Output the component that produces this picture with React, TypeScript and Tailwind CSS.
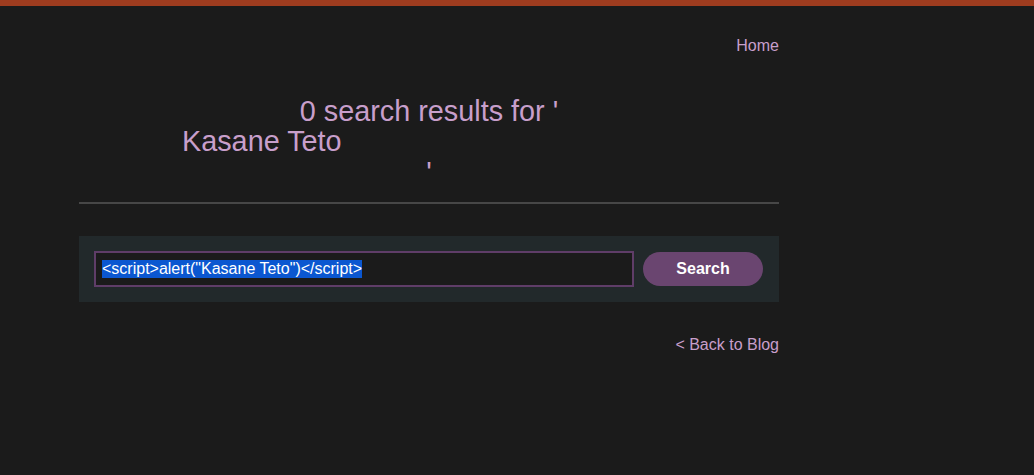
import { useState } from 'react';

const SearchBox = ({ term }: { term: string }) => {
  return (
    <section className="mt-[32px] bg-[#22292b] pl-[15px] pr-[16px] py-[15px] flex items-center gap-[9px]">
      <div className="flex-1 h-[36px] border-2 border-[#5f3d68] bg-[#1b1b1b] flex items-center px-[6px]">
        <span className="bg-[#0b57d0] text-white text-[16px] leading-[18px]">{term}</span>
      </div>
      <button className="w-[120px] h-[34px] rounded-full bg-[#6a4570] text-white font-bold text-[16px]">
        Search
      </button>
    </section>
  );
};

export default function App() {
  const [term] = useState('<script>alert("Kasane Teto")</script>');

  return (
    <div className="min-h-[475px] bg-[#1b1b1b] font-['Liberation_Sans',Arial,sans-serif]">
      <div className="h-[6px] bg-[#9e3c1f]" />
      <div className="w-[700px] ml-[79px]">
        <nav className="flex justify-end pt-[31px]">
          <a href="#" className="text-[16px] leading-[18px] text-[#c89fcb]">Home</a>
        </nav>

        <h1 className="mt-[41px] text-[28.8px] leading-[30px] text-[#c89fcb] text-center font-normal">
          <div>0 search results for '</div>
          <div className="text-left pl-[103px] leading-[31px]">Kasane Teto</div>
          <div>'</div>
        </h1>

        <hr className="mt-[15px] border-0 h-[2px] bg-[#474747]" />

        <SearchBox term={term} />

        <div className="flex justify-end mt-[34px]">
          <a href="#" className="text-[16px] leading-[18px] text-[#c89fcb]">&lt; Back to Blog</a>
        </div>
      </div>
    </div>
  );
}
